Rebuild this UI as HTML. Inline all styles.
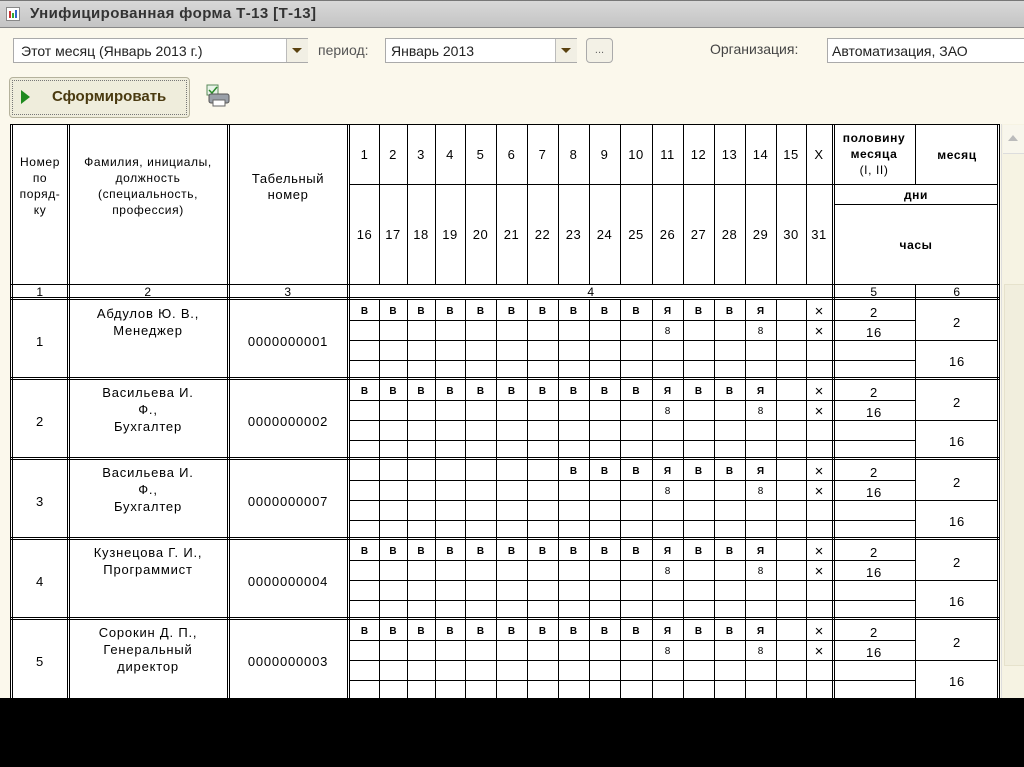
<!DOCTYPE html>
<html><head><meta charset="utf-8"><style>
html,body{margin:0;padding:0;width:1024px;height:767px;overflow:hidden;background:#fbf8ec;font-family:"Liberation Sans","DejaVu Sans",sans-serif}
.abs{position:absolute}
</style></head><body>
<div class="abs" style="left:0;top:0;width:1024px;height:28px;background:linear-gradient(#d8d8d8,#c4c4c4);border-top:1px solid #777;border-bottom:1px solid #888;box-sizing:border-box"></div>
<div class="abs" style="left:6px;top:7px;width:12px;height:12px;border:1px solid #888;background:#fff"><div class="abs" style="left:2px;top:3px;width:2px;height:7px;background:#c33"></div><div class="abs" style="left:5px;top:5px;width:2px;height:5px;background:#3a3"></div><div class="abs" style="left:8px;top:2px;width:2px;height:8px;background:#36c"></div></div>
<div class="abs" style="left:30px;top:5px;font-size:15px;font-weight:bold;color:#333;letter-spacing:0.4px">Унифицированная форма Т-13 [Т-13]</div>

<div class="abs" style="left:13px;top:38px;width:295px;height:25px;background:#fff;border:1px solid #aaa;box-sizing:border-box;font-size:14px;color:#222;padding:4px 7px">Этот месяц (Январь 2013 г.)</div>
<div class="abs" style="left:286px;top:39px;width:21px;height:23px;background:#f1efe4;border-left:1px solid #bbb"><div class="abs" style="left:5px;top:9px;border-left:5px solid transparent;border-right:5px solid transparent;border-top:5px solid #5a4210"></div></div>
<div class="abs" style="left:318px;top:42px;font-size:14px;color:#555">период:</div>
<div class="abs" style="left:385px;top:38px;width:192px;height:25px;background:#fff;border:1px solid #aaa;box-sizing:border-box;font-size:14px;color:#222;padding:4px 5px">Январь 2013</div>
<div class="abs" style="left:555px;top:39px;width:21px;height:23px;background:#f1efe4;border-left:1px solid #bbb"><div class="abs" style="left:5px;top:9px;border-left:5px solid transparent;border-right:5px solid transparent;border-top:5px solid #5a4210"></div></div>
<div class="abs" style="left:586px;top:38px;width:27px;height:25px;background:#f3f1e6;border:1px solid #aaa;border-radius:4px;box-sizing:border-box;font-size:11px;color:#666;text-align:center;line-height:22px">...</div>
<div class="abs" style="left:710px;top:41px;font-size:14px;color:#444">Организация:</div>
<div class="abs" style="left:827px;top:38px;width:200px;height:25px;background:#fff;border:1px solid #aaa;box-sizing:border-box;font-size:14px;color:#222;padding:4px 4px">Автоматизация, ЗАО</div>

<div class="abs" style="left:9px;top:77px;width:181px;height:41px;background:#efeddc;border:1px solid #b5b29c;border-radius:4px;box-sizing:border-box"><div class="abs" style="left:2px;top:2px;right:2px;bottom:2px;border:1px dotted #777"></div><div class="abs" style="left:11px;top:12px;border-top:7px solid transparent;border-bottom:7px solid transparent;border-left:9px solid #1f8a1f"></div><div class="abs" style="left:42px;top:10px;font-size:15px;font-weight:bold;color:#4a3a10">Сформировать</div></div>
<svg class="abs" style="left:205px;top:84px" width="26" height="24"><rect x="2" y="1" width="11" height="10" fill="#e8f3e8" stroke="#5a8a5a"/><path d="M4 6l3 3 5-6" stroke="#2a8a2a" fill="none" stroke-width="1.5"/><rect x="4" y="10" width="20" height="9" rx="2" fill="#9aa0a8" stroke="#555"/><rect x="8" y="16" width="12" height="6" fill="#fff" stroke="#666"/></svg>

<div class="abs" style="left:1001px;top:124px;width:23px;height:574px;background:#f6f3e3;border-left:1px solid #ddd"><div class="abs" style="left:1px;top:1px;width:21px;height:28px;background:#f8f6ec;border-bottom:1px solid #ddd"></div><div class="abs" style="left:6px;top:11px;border-left:5px solid transparent;border-right:5px solid transparent;border-bottom:6px solid #bbb"></div><div class="abs" style="left:2px;top:160px;width:19px;height:380px;background:#f1eedd;border:1px solid #e6e2cc"></div></div>

<svg class="abs" style="left:0;top:0" width="1024" height="767" font-family="Liberation Sans, DejaVu Sans, sans-serif" fill="#000">
<rect x="10" y="124" width="990" height="574" fill="#fff"/>
<g stroke="#000" stroke-width="1" shape-rendering="crispEdges">
<line x1="10.5" y1="124" x2="10.5" y2="698"/><line x1="12.5" y1="124" x2="12.5" y2="698"/>
<line x1="67.5" y1="124" x2="67.5" y2="698"/><line x1="69.5" y1="124" x2="69.5" y2="698"/>
<line x1="227.5" y1="124" x2="227.5" y2="698"/><line x1="229.5" y1="124" x2="229.5" y2="698"/>
<line x1="347.5" y1="124" x2="347.5" y2="698"/><line x1="349.5" y1="124" x2="349.5" y2="698"/>
<line x1="832.5" y1="124" x2="832.5" y2="698"/><line x1="834.5" y1="124" x2="834.5" y2="698"/>
<line x1="997.5" y1="124" x2="997.5" y2="698"/><line x1="999.5" y1="124" x2="999.5" y2="698"/>
<line x1="915.5" y1="124" x2="915.5" y2="184"/><line x1="915.5" y1="284" x2="915.5" y2="698"/>
<line x1="10" y1="124.5" x2="1000" y2="124.5"/>
<line x1="350" y1="184.5" x2="998" y2="184.5"/>
<line x1="835" y1="204.5" x2="998" y2="204.5"/>
<line x1="10" y1="284.5" x2="1000" y2="284.5"/>
<line x1="10" y1="297.5" x2="1000" y2="297.5"/><line x1="10" y1="299.5" x2="1000" y2="299.5"/>
<line x1="379.5" y1="124" x2="379.5" y2="284"/><line x1="407.5" y1="124" x2="407.5" y2="284"/><line x1="435.5" y1="124" x2="435.5" y2="284"/><line x1="465.5" y1="124" x2="465.5" y2="284"/><line x1="496.5" y1="124" x2="496.5" y2="284"/><line x1="527.5" y1="124" x2="527.5" y2="284"/><line x1="558.5" y1="124" x2="558.5" y2="284"/><line x1="589.5" y1="124" x2="589.5" y2="284"/><line x1="620.5" y1="124" x2="620.5" y2="284"/><line x1="652.5" y1="124" x2="652.5" y2="284"/><line x1="683.5" y1="124" x2="683.5" y2="284"/><line x1="714.5" y1="124" x2="714.5" y2="284"/><line x1="745.5" y1="124" x2="745.5" y2="284"/><line x1="776.5" y1="124" x2="776.5" y2="284"/><line x1="806.5" y1="124" x2="806.5" y2="284"/>
<line x1="379.5" y1="300" x2="379.5" y2="698"/><line x1="407.5" y1="300" x2="407.5" y2="698"/><line x1="435.5" y1="300" x2="435.5" y2="698"/><line x1="465.5" y1="300" x2="465.5" y2="698"/><line x1="496.5" y1="300" x2="496.5" y2="698"/><line x1="527.5" y1="300" x2="527.5" y2="698"/><line x1="558.5" y1="300" x2="558.5" y2="698"/><line x1="589.5" y1="300" x2="589.5" y2="698"/><line x1="620.5" y1="300" x2="620.5" y2="698"/><line x1="652.5" y1="300" x2="652.5" y2="698"/><line x1="683.5" y1="300" x2="683.5" y2="698"/><line x1="714.5" y1="300" x2="714.5" y2="698"/><line x1="745.5" y1="300" x2="745.5" y2="698"/><line x1="776.5" y1="300" x2="776.5" y2="698"/><line x1="806.5" y1="300" x2="806.5" y2="698"/>
<line x1="350" y1="320.5" x2="915" y2="320.5"/><line x1="350" y1="340.5" x2="998" y2="340.5"/><line x1="350" y1="360.5" x2="915" y2="360.5"/>
<line x1="10" y1="377.5" x2="1000" y2="377.5"/><line x1="10" y1="379.5" x2="1000" y2="379.5"/>
<line x1="350" y1="400.5" x2="915" y2="400.5"/><line x1="350" y1="420.5" x2="998" y2="420.5"/><line x1="350" y1="440.5" x2="915" y2="440.5"/>
<line x1="10" y1="457.5" x2="1000" y2="457.5"/><line x1="10" y1="459.5" x2="1000" y2="459.5"/>
<line x1="350" y1="480.5" x2="915" y2="480.5"/><line x1="350" y1="500.5" x2="998" y2="500.5"/><line x1="350" y1="520.5" x2="915" y2="520.5"/>
<line x1="10" y1="537.5" x2="1000" y2="537.5"/><line x1="10" y1="539.5" x2="1000" y2="539.5"/>
<line x1="350" y1="560.5" x2="915" y2="560.5"/><line x1="350" y1="580.5" x2="998" y2="580.5"/><line x1="350" y1="600.5" x2="915" y2="600.5"/>
<line x1="10" y1="617.5" x2="1000" y2="617.5"/><line x1="10" y1="619.5" x2="1000" y2="619.5"/>
<line x1="350" y1="640.5" x2="915" y2="640.5"/><line x1="350" y1="660.5" x2="998" y2="660.5"/><line x1="350" y1="680.5" x2="915" y2="680.5"/>
</g>
<g font-size="13" text-anchor="middle" letter-spacing="0.5">
<text x="364.5" y="159">1</text>
<text x="393" y="159">2</text><text x="421" y="159">3</text><text x="450" y="159">4</text><text x="480.5" y="159">5</text><text x="511.5" y="159">6</text><text x="542.5" y="159">7</text><text x="573.5" y="159">8</text><text x="604.5" y="159">9</text><text x="636" y="159">10</text><text x="667.5" y="159">11</text><text x="698.5" y="159">12</text><text x="729.5" y="159">13</text><text x="760.5" y="159">14</text><text x="791" y="159">15</text><text x="819" y="159">Х</text>
<text x="364.5" y="239">16</text><text x="393" y="239">17</text><text x="421" y="239">18</text><text x="450" y="239">19</text><text x="480.5" y="239">20</text><text x="511.5" y="239">21</text><text x="542.5" y="239">22</text><text x="573.5" y="239">23</text><text x="604.5" y="239">24</text><text x="636" y="239">25</text><text x="667.5" y="239">26</text><text x="698.5" y="239">27</text><text x="729.5" y="239">28</text><text x="760.5" y="239">29</text><text x="791" y="239">30</text><text x="819" y="239">31</text>
</g>
<g font-size="12" text-anchor="middle" letter-spacing="0.6">
<text x="40" y="166">Номер</text><text x="40" y="182">по</text><text x="40" y="198">поряд-</text><text x="40" y="214">ку</text>
<text x="148" y="166">Фамилия, инициалы,</text><text x="148" y="182">должность</text><text x="148" y="198">(специальность,</text><text x="148" y="214">профессия)</text>
<text x="288" y="183" font-size="13">Табельный</text><text x="288" y="199" font-size="13">номер</text>
<text x="874" y="142" font-weight="bold">половину</text><text x="874" y="158" font-weight="bold">месяца</text><text x="874" y="174">(I, II)</text>
<text x="957" y="159" font-weight="bold">месяц</text>
<text x="916" y="199" font-weight="bold">дни</text>
<text x="916" y="249" font-weight="bold">часы</text>
<text x="40" y="296">1</text><text x="148" y="296">2</text><text x="288" y="296">3</text><text x="591" y="296">4</text><text x="874" y="296">5</text><text x="957" y="296">6</text>
</g>
<g font-size="13" text-anchor="middle" letter-spacing="0.8">
<text x="40" y="346">1</text><text x="148" y="318">Абдулов Ю. В.,</text><text x="148" y="335">Менеджер</text><text x="288" y="346">0000000001</text>
<text x="40" y="426">2</text><text x="148" y="397">Васильева И.</text><text x="148" y="414">Ф.,</text><text x="148" y="431">Бухгалтер</text><text x="288" y="426">0000000002</text>
<text x="40" y="506">3</text><text x="148" y="477">Васильева И.</text><text x="148" y="494">Ф.,</text><text x="148" y="511">Бухгалтер</text><text x="288" y="506">0000000007</text>
<text x="40" y="586">4</text><text x="148" y="557">Кузнецова Г. И.,</text><text x="148" y="574">Программист</text><text x="288" y="586">0000000004</text>
<text x="40" y="666">5</text><text x="148" y="637">Сорокин Д. П.,</text><text x="148" y="654">Генеральный</text><text x="148" y="671">директор</text><text x="288" y="666">0000000003</text>
<text x="874" y="317">2</text><text x="874" y="337">16</text><text x="957" y="327">2</text><text x="957" y="366">16</text>
<text x="874" y="397">2</text><text x="874" y="417">16</text><text x="957" y="407">2</text><text x="957" y="446">16</text>
<text x="874" y="477">2</text><text x="874" y="497">16</text><text x="957" y="487">2</text><text x="957" y="526">16</text>
<text x="874" y="557">2</text><text x="874" y="577">16</text><text x="957" y="567">2</text><text x="957" y="606">16</text>
<text x="874" y="637">2</text><text x="874" y="657">16</text><text x="957" y="647">2</text><text x="957" y="686">16</text>
</g>
<g font-size="10" font-weight="bold" text-anchor="middle">
<text x="364.5 393 421 450 480.5 511.5 542.5 573.5 604.5 636 667.5 698.5 729.5 760.5" y="314">ВВВВВВВВВВЯВВЯ</text>
<text x="364.5 393 421 450 480.5 511.5 542.5 573.5 604.5 636 667.5 698.5 729.5 760.5" y="394">ВВВВВВВВВВЯВВЯ</text>
<text x="573.5 604.5 636 667.5 698.5 729.5 760.5" y="474">ВВВЯВВЯ</text>
<text x="364.5 393 421 450 480.5 511.5 542.5 573.5 604.5 636 667.5 698.5 729.5 760.5" y="554">ВВВВВВВВВВЯВВЯ</text>
<text x="364.5 393 421 450 480.5 511.5 542.5 573.5 604.5 636 667.5 698.5 729.5 760.5" y="634">ВВВВВВВВВВЯВВЯ</text>
<g font-weight="normal"><text x="667.5 760.5" y="334">88</text><text x="667.5 760.5" y="414">88</text><text x="667.5 760.5" y="494">88</text><text x="667.5 760.5" y="574">88</text><text x="667.5 760.5" y="654">88</text></g>
</g>
<g font-size="15" text-anchor="middle">
<text x="819" y="316">×</text><text x="819" y="336">×</text><text x="819" y="396">×</text><text x="819" y="416">×</text><text x="819" y="476">×</text><text x="819" y="496">×</text><text x="819" y="556">×</text><text x="819" y="576">×</text><text x="819" y="636">×</text><text x="819" y="656">×</text>
</g>
<rect x="0" y="698" width="1024" height="69" fill="#000"/>
</svg>
</body></html>
